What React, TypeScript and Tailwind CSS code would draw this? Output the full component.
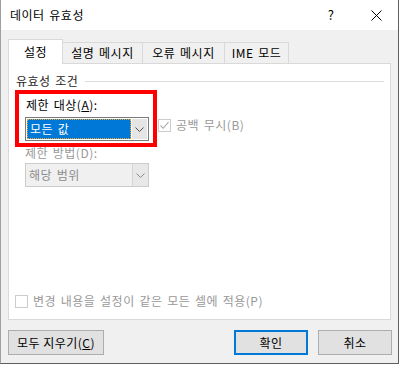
const font = { fontFamily: '"Noto Sans CJK KR", "Noto Sans", sans-serif' };

function Chevron({ color }: { color: string }) {
  return (
    <svg width="9" height="5" viewBox="0 0 9 5" fill="none">
      <path d="M0.5 0.5L4.5 4.5L8.5 0.5" stroke={color} strokeWidth="1" />
    </svg>
  );
}

function Checkbox({ checked }: { checked?: boolean }) {
  return (
    <div className="w-[13px] h-[13px] border border-[#cccccc] bg-white flex items-center justify-center shrink-0">
      {checked && (
        <svg width="11" height="11" viewBox="0 0 11 11" fill="none">
          <path d="M1.5 5.5L4.2 8.3L9.5 2.2" stroke="#a8a8a8" strokeWidth="1.1" />
        </svg>
      )}
    </div>
  );
}

function Tab({ label, w }: { label: string; w: string }) {
  return (
    <div className={`${w} h-[21px] border-t border-r border-[#d9d9d9] bg-[#f0f0f0] flex items-center justify-center text-[12px] leading-[14px] text-black`}>
      {label}
    </div>
  );
}

export default function App() {
  return (
    <div className="w-[400px] h-[365px] bg-white tracking-[0.5px] [word-spacing:1.5px]" style={font}>
      <div className="w-[399px] h-[364px] flex flex-col border-l border-r border-b border-l-[#a0a0a0] border-r-[#5f5f5f] border-b-[#5f5f5f]">
        {/* title bar */}
        <div className="h-[30px] bg-white flex items-center shrink-0">
          <span className="pl-[9px] text-[12px] leading-[14px] text-black">데이터 유효성</span>
          <div className="ml-auto flex h-full">
            <div className="w-[46px] h-full flex items-center justify-center text-[13px] text-black">?</div>
            <div className="w-[44px] h-full flex items-center justify-center">
              <svg width="11" height="11" viewBox="0 0 11 11" fill="none">
                <path d="M0.5 0.5L10.5 10.5M10.5 0.5L0.5 10.5" stroke="#000" strokeWidth="1" />
              </svg>
            </div>
          </div>
        </div>

        {/* body */}
        <div className="flex-1 bg-[#f0f0f0] pt-[9px] pl-[7px] pr-[7px] flex flex-col">
          {/* tabs */}
          <div className="flex items-end">
            <div className="relative z-10 -mb-px w-[55px] h-[25px] border border-b-0 border-[#d9d9d9] bg-white flex items-center justify-center text-[12px] leading-[14px] text-black">
              설정
            </div>
            <Tab label="설명 메시지" w="w-[80px]" />
            <Tab label="오류 메시지" w="w-[82px]" />
            <Tab label="IME 모드" w="w-[64px]" />
          </div>

          {/* panel */}
          <div className="h-[257px] border border-[#d9d9d9] bg-white flex flex-col">
            <div className="flex items-center mt-[9px] pl-[7px] pr-[6px]">
              <span className="text-[12px] leading-[16px] text-[#1e1e1e]">유효성 조건</span>
              <div className="flex-1 h-px bg-[#dcdcdc] ml-[7px] mt-[1px]" />
            </div>

            <div className="flex items-start mt-[1px] ml-[6px]">
              <div className="w-[142px] h-[57px] border-4 border-[#ff0000] pt-[3px]">
                <div className="pl-[7px] text-[12px] leading-[16px] text-black">
                  제한 대상(<span className="underline">A</span>):
                </div>
                <div className="mt-[4px] ml-[6px] w-[124px] h-[24px] border border-[#7a7a7a] bg-white flex p-px">
                  <div className="flex-1 bg-[#0078d7] border border-dotted border-[#f5a623] flex items-center pl-[2px] text-[12px] leading-[14px] text-white">
                    모든 값
                  </div>
                  <div className="w-[15px] ml-px bg-[#e5e5e5] flex items-center justify-center">
                    <Chevron color="#505050" />
                  </div>
                </div>
              </div>
              <div className="flex items-center mt-[28px] ml-[1px]">
                <Checkbox checked />
                <span className="ml-[5px] text-[12px] leading-[14px] text-[#999999]">공백 무시(B)</span>
              </div>
            </div>

            <div className="ml-[16px] mt-0 text-[12px] leading-[12px] text-[#999999]">제한 방법(D):</div>
            <div className="ml-[16px] mt-[4px] w-[124px] h-[24px] border border-[#cccccc] bg-[#f0f0f0] flex">
              <div className="flex-1 flex items-center pl-[3px] text-[12px] leading-[14px] text-[#8c8c8c]">해당 범위</div>
              <div className="w-[16px] border-l border-[#d4d4d4] bg-[#e8e8e8] flex items-center justify-center">
                <Chevron color="#8a8a8a" />
              </div>
            </div>

            <div className="mt-auto mb-[11px] pl-[6px] flex items-center">
              <Checkbox />
              <span className="ml-[5px] text-[12px] leading-[14px] text-[#999999]">
                변경 내용을 설정이 같은 모든 셀에 적용(P)
              </span>
            </div>
          </div>

          {/* buttons */}
          <div className="mt-[10px] flex items-start">
            <button className="w-[96px] h-[25px] border border-[#adadad] bg-[#e1e1e1] text-[12px] leading-[14px] text-black">
              모두 지우기(<span className="underline">C</span>)
            </button>
            <div className="ml-auto flex gap-[10px] -mr-px">
              <button className="w-[74px] h-[25px] border-2 border-[#0078d7] bg-[#e1e1e1] text-[12px] leading-[14px] text-black">
                확인
              </button>
              <button className="w-[74px] h-[25px] border border-[#adadad] bg-[#e1e1e1] text-[12px] leading-[14px] text-black">
                취소
              </button>
            </div>
          </div>
        </div>
      </div>
    </div>
  );
}
